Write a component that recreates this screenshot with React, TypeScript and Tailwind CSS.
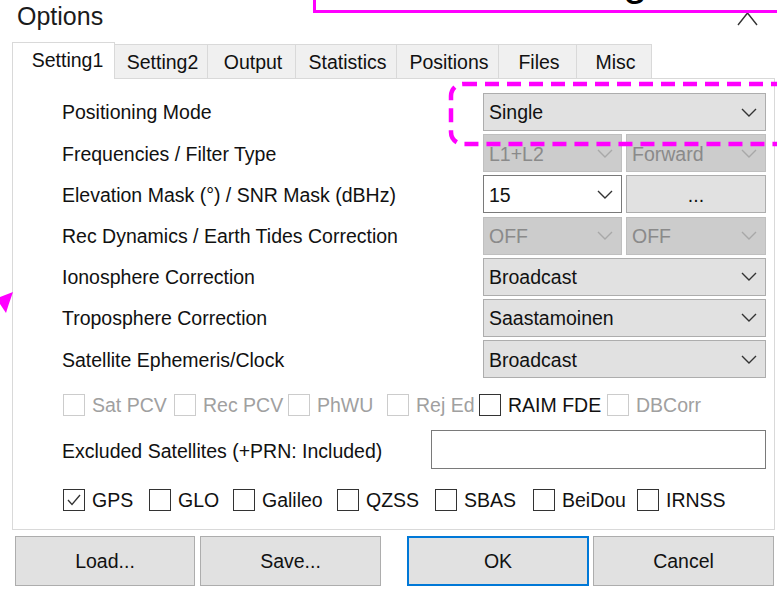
import React from 'react';

type Field =
  | { kind: 'combo'; value: string; span?: boolean; disabled?: boolean; edit?: boolean }
  | { kind: 'button'; value: string };

const rows: { label: string; fields: Field[] }[] = [
  { label: 'Positioning Mode', fields: [{ kind: 'combo', value: 'Single', span: true }] },
  {
    label: 'Frequencies / Filter Type',
    fields: [
      { kind: 'combo', value: 'L1+L2', disabled: true },
      { kind: 'combo', value: 'Forward', disabled: true },
    ],
  },
  {
    label: 'Elevation Mask (°) / SNR Mask (dBHz)',
    fields: [
      { kind: 'combo', value: '15', edit: true },
      { kind: 'button', value: '...' },
    ],
  },
  {
    label: 'Rec Dynamics / Earth Tides Correction',
    fields: [
      { kind: 'combo', value: 'OFF', disabled: true },
      { kind: 'combo', value: 'OFF', disabled: true },
    ],
  },
  { label: 'Ionosphere Correction', fields: [{ kind: 'combo', value: 'Broadcast', span: true }] },
  { label: 'Troposphere Correction', fields: [{ kind: 'combo', value: 'Saastamoinen', span: true }] },
  { label: 'Satellite Ephemeris/Clock', fields: [{ kind: 'combo', value: 'Broadcast', span: true }] },
];

const options = [
  { label: 'Sat PCV', w: 'w-[111px]', disabled: true },
  { label: 'Rec PCV', w: 'w-[114px]', disabled: true },
  { label: 'PhWU', w: 'w-[99px]', disabled: true },
  { label: 'Rej Ed', w: 'w-[92px]', disabled: true },
  { label: 'RAIM FDE', w: 'w-[128px]', disabled: false },
  { label: 'DBCorr', w: 'w-[110px]', disabled: true },
];

const systems = [
  { label: 'GPS', w: 'w-[86px]', checked: true },
  { label: 'GLO', w: 'w-[84px]' },
  { label: 'Galileo', w: 'w-[104px]' },
  { label: 'QZSS', w: 'w-[98px]' },
  { label: 'SBAS', w: 'w-[98px]' },
  { label: 'BeiDou', w: 'w-[104px]' },
  { label: 'IRNSS', w: 'w-[100px]' },
];

const tabs = ['Setting1', 'Setting2', 'Output', 'Statistics', 'Positions', 'Files', 'Misc'];
const tabWidths = ['w-[103px]', 'w-[93px]', 'w-[88px]', 'w-[101px]', 'w-[102px]', 'w-[78px]', 'w-[75px]'];

const Chevron = ({ disabled }: { disabled?: boolean }) => (
  <svg width="16" height="9" viewBox="0 0 16 9" className="shrink-0">
    <path d="M1 1 L8 8 L15 1" fill="none" stroke={disabled ? '#a8a8a8' : '#333'} strokeWidth="1.4" />
  </svg>
);

const Combo = ({ f }: { f: Field }) => {
  if (f.kind === 'button') {
    return (
      <div className="h-[38px] flex items-center justify-center pt-[2px] bg-[#e1e1e1] border border-[#adadad] text-[#111]">
        {f.value}
      </div>
    );
  }
  const tone = f.disabled
    ? 'bg-[#cccccc] border-[#bfbfbf] text-[#8a8a8a]'
    : f.edit
      ? 'bg-white border-[#7a7a7a] text-[#111]'
      : 'bg-[#e1e1e1] border-[#adadad] text-[#111]';
  return (
    <div className={`h-[38px] flex items-center justify-between pl-[5px] pr-[8px] border ${tone} ${f.span ? 'col-span-2' : ''}`}>
      <span className="pt-[2px]">{f.value}</span>
      <Chevron disabled={f.disabled} />
    </div>
  );
};

const Check = ({ label, w, checked, disabled }: { label: string; w: string; checked?: boolean; disabled?: boolean }) => (
  <div className={`${w} flex items-center gap-[7px] shrink-0`}>
    <div className={`w-[22px] h-[22px] border bg-white flex items-center justify-center ${disabled ? 'border-[#cccccc]' : 'border-[#333]'}`}>
      {checked && (
        <svg width="16" height="14" viewBox="0 0 16 14">
          <path d="M2 7 L6 11.5 L14 2" fill="none" stroke="#333" strokeWidth="1.3" />
        </svg>
      )}
    </div>
    <span className={`pt-[1px] ${disabled ? 'text-[#a0a0a0]' : 'text-[#111]'}`}>{label}</span>
  </div>
);

export default function App() {
  return (
    <div className="relative w-[777px] h-[591px] overflow-hidden bg-white font-['Liberation_Sans',Arial,sans-serif] text-[19.5px] text-[#111]">
      {/* title bar */}
      <div className="h-[42px] pl-[17px] pt-[1px] text-[25px] leading-[30px] text-[#1b1b1b]">Options</div>
      <svg className="absolute left-[736px] top-0" width="24" height="28" viewBox="0 0 24 28">
        <path d="M2 1 L21 25 M21 1 L2 25" stroke="#333" strokeWidth="1.4" fill="none" />
      </svg>

      {/* tab strip */}
      <div className="flex items-end h-[36px] pl-[12px]">
        {tabs.map((t, i) =>
          i === 0 ? (
            <div
              key={t}
              className={`${tabWidths[i]} relative z-10 h-[37px] -mb-px bg-white border border-b-0 border-[#d9d9d9] flex items-center justify-center pl-[8px]`}
            >
              {t}
            </div>
          ) : (
            <div
              key={t}
              className={`${tabWidths[i]} h-[34px] bg-[#f0f0f0] border-t border-r border-[#d9d9d9] flex items-center justify-center pt-[2px] pl-[3px]`}
            >
              {t}
            </div>
          ),
        )}
      </div>

      {/* tab page */}
      <div className="ml-[12px] w-[763px] h-[452px] border border-[#d9d9d9] bg-white pt-[14px] pl-[49px] pr-[8px] flex flex-col">
        <div className="grid grid-cols-[417px_139px_140px] gap-x-[4px] gap-y-[3.2px]">
          {rows.map((r) => (
            <React.Fragment key={r.label}>
              <div className="h-[38px] flex items-center pt-[2px]">{r.label}</div>
              {r.fields.map((f, j) => (
                <Combo key={j} f={f} />
              ))}
            </React.Fragment>
          ))}
        </div>

        <div className="mt-[15px] h-[24px] flex items-center pl-[1px]">
          {options.map((o) => (
            <Check key={o.label} label={o.label} w={o.w} disabled={o.disabled} />
          ))}
        </div>

        <div className="mt-[13px] flex items-center">
          <span className="w-[370px] pt-[4px]">Excluded Satellites (+PRN: Included)</span>
          <div className="w-[335px] h-[39px] border border-[#7a7a7a] bg-white" />
        </div>

        <div className="mt-[19px] h-[24px] flex items-center pl-[1px]">
          {systems.map((s) => (
            <Check key={s.label} label={s.label} w={s.w} checked={s.checked} />
          ))}
        </div>
      </div>

      {/* dialog buttons */}
      <div className="mt-[6px] pl-[15px] flex">
        <div className="w-[180px] h-[50px] pt-[2px] bg-[#e1e1e1] border border-[#adadad] flex items-center justify-center">Load...</div>
        <div className="ml-[5px] w-[181px] h-[50px] pt-[2px] bg-[#e1e1e1] border border-[#adadad] flex items-center justify-center">Save...</div>
        <div className="ml-[26px] w-[182px] h-[50px] pt-[2px] bg-[#e1e1e1] border-2 border-[#0078d7] flex items-center justify-center">OK</div>
        <div className="ml-[4px] w-[181px] h-[50px] pt-[2px] bg-[#e1e1e1] border border-[#adadad] flex items-center justify-center">Cancel</div>
      </div>

      {/* callout box along the top */}
      <div className="absolute left-[313px] top-[-10px] right-[-10px] h-[23px] border-[3px] border-[#ff00ff] bg-white overflow-hidden">
        <span className="absolute left-[307px] top-[-35px] text-[44px] leading-[44px] text-black">g</span>
      </div>

      {/* dashed highlight around the mode selector */}
      <svg className="absolute left-[447px] top-[80px]" width="360" height="68" viewBox="0 0 360 68">
        <rect x="4" y="4" width="380" height="60" rx="12" fill="none" stroke="#ff00ff" strokeWidth="4.5" strokeDasharray="14 8" />
      </svg>

      {/* arrow tip at the left edge */}
      <svg className="absolute left-0 top-[288px]" width="16" height="28" viewBox="0 0 16 28">
        <polygon points="13,4 0,9 0,16 6,25 8.5,17" fill="#ff00ff" />
      </svg>
    </div>
  );
}
